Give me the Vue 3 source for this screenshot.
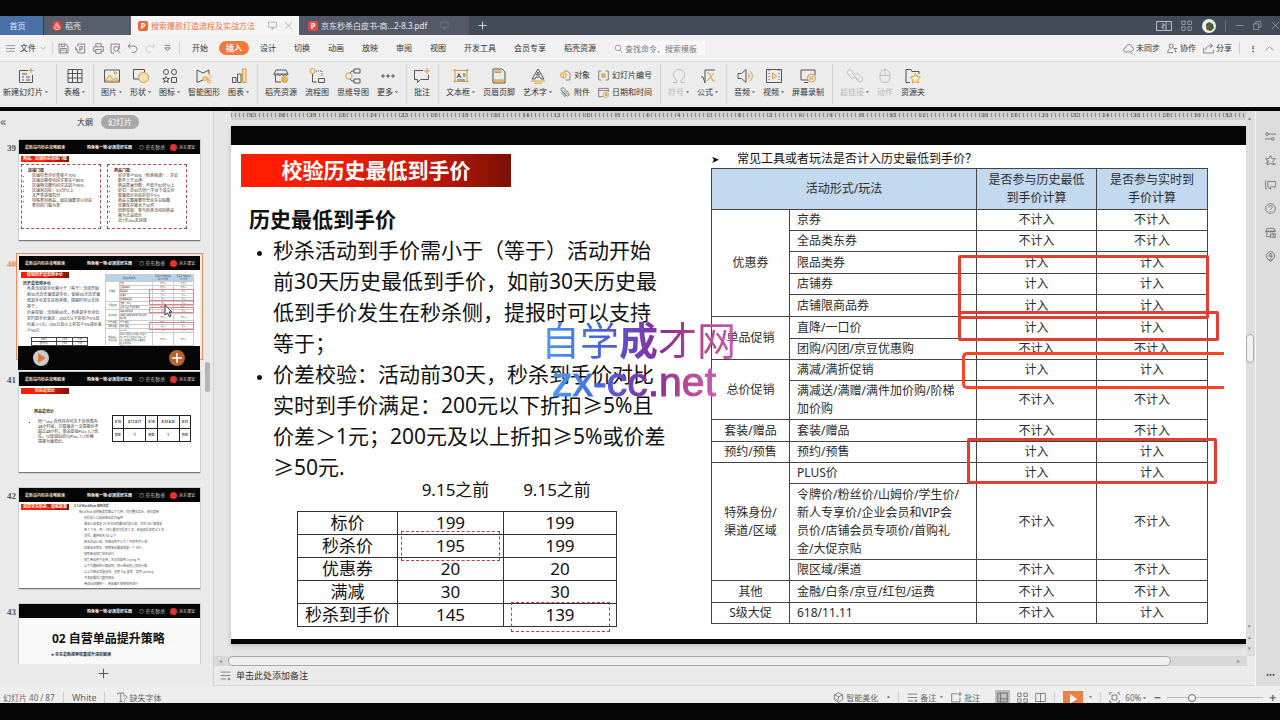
<script setup>
import { ref } from 'vue'

const D = 'stroke="#555"'
const O = 'stroke="#d99a3c"'
const G = 'stroke="#bdbdbd"'

const icons = {
  newSlide: `<path ${D} d="M10 2.500H1.500v12h13V7"/><path ${D} d="M4 6h5M4 9h2M8 9h4M4 12h2M8 12h4"/><path ${O} d="M13 0v5M10.500 2.500h5"/>`,
  table: `<path ${D} d="M1 1.500h14v13H1zM1 5.500h14M1 10h14M5.500 1.500v13M10.500 1.500v13"/>`,
  picture: `<path ${D} d="M.5 2h15v12H.5z"/><path ${O} fill="#f3dcae" d="M1 13l4.500-6 4 5 2.500-2.500 3 3.500z"/><circle ${O} cx="11.500" cy="5" r="1.200"/>`,
  shapes: `<path ${D} d="M6 11H.5V1.500h11V4"/><circle ${O} fill="#f5deb4" cx="10.500" cy="9.500" r="5"/>`,
  glyphs: `<circle ${D} cx="4" cy="4" r="2.500"/><circle ${D} cx="12" cy="4" r="2.500"/><path ${D} d="M4 8.500l1 2h2.500l-2 1.500.7 2.500-2.200-1.500-2.200 1.500.7-2.500-2-1.500H3zM9.500 9.500h5v5h-5z"/>`,
  smart: `<path ${D} d="M7 12L1 14.500V2l6 3 6-3v4"/><path ${O} fill="#fbeed6" d="M7 9h4v3H7zM12 5.500l3 3-3 3-2-2M13 12a1.500 1.500 0 1 0 .1 0"/>`,
  chart: `<path ${D} d="M1.500 9.500h3.500v5H1.500zM6.500 6h3.500v8.500H6.500z"/><path ${O} fill="#f5deb4" d="M11.500 1h3.500v13.500h-3.500z"/>`,
  store: `<path ${D} d="M3 2h10l2 4H1zM1 6c0 2 3 2 3.500 0C5 8 8 8 8.500 6c.5 2 3 2 3.500 0 0 2 3 1.500 3 0M2.500 8v6H8"/><circle ${O} fill="#f0c46e" cx="11.500" cy="11.500" r="3"/><path ${O} d="M9 9l5 5M14 9l-5 5"/>`,
  storeGrey: `<path ${D} d="M3 2h10l2 4H1zM1 6c0 2 3 2 3.500 0C5 8 8 8 8.500 6c.5 2 3 2 3.500 0 0 2 3 1.500 3 0M2.500 8v6H7"/><path ${D} d="M8 10h7v5H8zM12 10v5"/>`,
  flow: `<circle ${O} cx="3.500" cy="3" r="2.500"/><path ${D} stroke-dasharray="1 1" d="M7 3h6v6"/><path ${D} d="M3.500 6v8H8M9.500 10.500h6v4h-6z"/>`,
  mind: `<circle ${O} cx="4" cy="8" r="3.200"/><path ${D} d="M9 1h6v4H9zM9 11h6v4H9zM5 5l2-2h2M5 11l2 2h2"/>`,
  more: `<path ${D} d="M2 7h2v2H2zM7 7h2v2H7zM12 7h2v2h-2z"/>`,
  comment: `<path ${D} d="M9 2.500H.5v9h3v3l3-3h8V7"/><path ${O} d="M13 0v6M10 3h6"/>`,
  textbox: `<path ${O} d="M2 2.500h12v11H2z"/><path stroke="#d99a3c" fill="#d99a3c" d="M1 1.500h1v1H1zM14 1.500h1v1h-1zM1 13h1v1H1zM14 13h1v1h-1z"/><path ${D} d="M4 10l2-4.500L8 10M5 8.500h2M10 6h2.500M10 8h2.500M4 12h8"/>`,
  header: `<path ${D} d="M2 1h9l3 3v11H2z"/><path ${O} fill="#f0c888" d="M4 3h6v1.500H4zM3 12h10v2H3z"/>`,
  wordart: `<path ${D} d="M8 1L2 11h3l1-2h4l1 2h3zM8 4l-1.500 3h3z"/><path ${O} d="M1 13h14M4 15.200h8"/>`,
  object: `<path ${D} d="M6 1.500h5l3.500 3.500v9.500H8"/><path ${O} fill="#f3dcae" d="M5 3l4 2v5l-4 2-4-2V5zM1 5l4 2 4-2M5 7v5"/>`,
  clip: `<path ${D} d="M3 5l6 7a2 2 0 0 0 4-3L6 2a2.500 2.500 0 0 0-4 3l7 8M6 5l6 6M2 8l6 7"/>`,
  number: `<path ${D} d="M5 1.500H1v13h4M11 1.500h4v13h-4"/><path ${O} fill="#e9b25b" d="M5.500 5.500h5v5h-5z"/>`,
  date: `<path ${D} d="M7 14H1V2h14v5M1 5h14"/><circle ${O} fill="#f5deb4" cx="11.500" cy="11.500" r="4"/><path ${D} d="M11.500 9v3h2"/>`,
  omega: `<path ${G} d="M2 14.500h4v-2C0 9 2 1.500 8 1.500s8 7.500 2 11v2h4"/>`,
  formula: `<path ${D} d="M1 9h2l2 6V2h10"/><path ${O} d="M7 5h2l4 8h2M14 5L7 13"/>`,
  audio: `<path ${D} d="M1 5.500h3.500L9 1.500v13l-4.500-4H1z"/><path ${O} d="M11 5c1.500 2 1.500 4 0 6M13 3c3 3 3 7 0 10"/>`,
  video: `<path ${D} d="M.5 1.500h15v13H.5z"/><path ${D} stroke-dasharray="1 2" d="M3 2v12M13 2v12"/><path ${O} d="M6.500 5l4 3-4 3z"/>`,
  record: `<path ${D} d="M8 12H1V2h14v5M4 14.500h4"/><circle ${O} cx="11.500" cy="10" r="4"/><circle ${O} cx="11.500" cy="10" r="1.500"/>`,
  link: `<path ${G} d="M8 6L5 2.500a2.500 2.500 0 0 0-4 3.500l3 3.500a2.500 2.500 0 0 0 3.500 0M8 9l3 4a2.500 2.500 0 0 0 4-3.500L12 6.500a2.500 2.500 0 0 0-3.500 0M5 5l6 7"/>`,
  mouse: `<path ${G} d="M3 7c0-7 10-7 10 0v3c0 6-10 6-10 0zM3 7.500h10M8 0v7"/>`,
  folder: `<path ${D} d="M5 14.500H1v-13h5l1 2h7V6"/><path ${O} fill="#fdf3dc" d="M10.500 5.500l1.500 3 3.500.5-2.500 2.500.5 3.500-3-1.700-3 1.700.5-3.500L5.500 9l3.500-.5z"/>`,
  save: `<path ${D} d="M1.500 1.500h10l3 3v10h-13zM4 14V8h8v6M5 2v3h5V2M6 10.500h4"/>`,
  exportPdf: `<path ${D} d="M4 5V1.500h10v13H4V11M1 5v5h2M7 12V5h3.500v4H7M1 8l3 2"/>`,
  print: `<path ${D} d="M4 5V1h8v4M3 12H1V5.500h14V12h-2M4 9.500h8v5.500H4z"/>`,
  preview: `<path ${D} d="M6 14.500H1.500v-13h12V9"/><circle ${D} cx="9" cy="8.500" r="3.500"/><path ${D} d="M11.500 11l3.500 4"/>`,
  undo: `<path ${D} d="M5 1L1.500 4.500 5 8M2 4.500h8c6 0 6 9 0 9H7"/>`,
  redo: `<path ${G} d="M11 1l3.500 3.500L11 8M14 4.500H6c-6 0-6 9 0 9h3"/>`,
  search: `<circle ${D} cx="7" cy="7" r="5"/><path ${D} d="M11 11l4 4"/>`,
  cloud: `<path ${D} d="M9 13H4C0 13 0 7 4 7c0-6 9-6 9-1 3 1 3 3 2 4M9 11l2 2 4-3M11 15h3"/>`,
  collab: `<circle ${D} cx="6" cy="4.500" r="3"/><path ${D} d="M4 8c-3 2-3 6-3 6h8M12 8v5M9.500 8H15M12 13h2"/>`,
  share: `<path ${D} d="M1 7v7.500h14V10M4 10c0-5 4-6 9-6M10 1l4 3-4 3"/>`,
  sliders: `<circle ${D} cx="3" cy="4.500" r="2"/><path ${D} d="M5 4.500h11M0 11.500h9"/><circle ${D} cx="11.500" cy="11.500" r="2"/>`,
  star: `<path ${D} d="M8 1l2 4 5 .5-3.500 4 1 5L8 12l-4.500 2.500 1-5L1 5.500 6 5zM1 13l4-5M13 13h3"/>`,
  slides: `<path ${D} d="M3 14H.5V2M4 3.500h11.500v8H8V15l-3-3.500H4z"/>`,
  help: `<circle ${D} cx="8" cy="8" r="7"/><path ${D} d="M5.500 6.500c0-4 5-3 5-.5 0 2-2.500 2-2.500 4M8 11.500V13"/>`,
  pin: `<circle ${D} cx="8" cy="7" r="6"/><path ${D} d="M5 12.500l3 3 3-3M8 3L5.500 7.500h5L8 11M8 3l2.500 4.500"/>`,
  notes: `<path ${D} d="M1 3h14M1 8h14M1 13h8M11 13h4M13 11v4"/>`,
  font: `<path ${D} d="M1 4V1.500h9V4M5.500 1.500V14M3 14h5M9 6c4-2 7 1 4 3-2 1-2 2-2 3M11 13.500V15"/>`,
  beauty: `<path ${D} d="M8 1l6 3v7l-6 4-6-4V4zM2 4l6 3 6-3M8 7v4M5 10l2 3"/>`,
  commentSmall: `<path ${D} d="M9 2.500H1v12h12V8M13 0v6M10 3h6"/>`,
  normal: `<path ${D} d="M1 1.500h14v13H1zM5 1.500v13M5 10h10"/>`,
  grid: `<path ${D} d="M1 1.500h5v5H1zM10 1.500h5v5h-5zM1 10h5v5H1zM10 10h5v5h-5z"/>`,
  reading: `<path ${D} d="M1 2h14v12H1zM8 2v13"/>`,
  fit: `<path ${D} d="M1 4V1h3M12 1h3v3M15 12v3h-3M4 15H1v-3M4.500 4.500h7v7h-7z"/>`,
  monitor: `<path stroke="currentColor" d="M1 2h14v9H1zM5 14h6M8 11v3"/>`,
  plus: `<path stroke="currentColor" stroke-width="1.500" d="M8 1v14M1 8h14"/>`,
  windows: `<path stroke="currentColor" d="M.5 3.500h15v9H.5zM10 3.500v9M5.500 6h2.500v2H6v2h2.500M12.500 6h1"/>`,
  gridLight: `<path stroke="currentColor" d="M1 1.500h5v5H1zM10 1.500h5v5h-5zM1 10h5v5H1zM10 10h5v5h-5z"/>`,
  min: `<path stroke="currentColor" d="M1 8h14"/>`,
  restore: `<path stroke="currentColor" d="M1 5h9v10H1zM5 5V1h9v10h-4"/>`,
  close: `<path stroke="currentColor" d="M2 2l12 12M14 2L2 14"/>`,
  up: `<path ${D} d="M1 11l7-6 7 6"/>`,
  down: `<path ${D} d="M2 5l6 6 6-6"/>`,
  tray: `<path ${D} d="M4 3.500h8M4 7h8l-4 4z"/>`,
  menu: `<path ${D} d="M0 3h16M0 8h16M0 13h16"/>`,
}

const quick = ['save', 'exportPdf', 'print', 'preview', 'undo', 'redo', 'tray']
const menus = ['开始', '插入', '设计', '切换', '动画', '放映', '审阅', '视图', '开发工具', '会员专享', '稻壳资源']

const ribbon = [
  { icon: 'newSlide', label: '新建幻灯片', arrow: true }, { sep: true },
  { icon: 'table', label: '表格', arrow: true }, { sep: true },
  { icon: 'picture', label: '图片', arrow: true },
  { icon: 'shapes', label: '形状', arrow: true },
  { icon: 'glyphs', label: '图标', arrow: true },
  { icon: 'smart', label: '智能图形' },
  { icon: 'chart', label: '图表', arrow: true }, { sep: true },
  { icon: 'store', label: '稻壳资源' },
  { icon: 'flow', label: '流程图' },
  { icon: 'mind', label: '思维导图' },
  { icon: 'more', label: '更多', arrow: true }, { sep: true },
  { icon: 'comment', label: '批注' }, { sep: true },
  { icon: 'textbox', label: '文本框', arrow: true },
  { icon: 'header', label: '页眉页脚' },
  { icon: 'wordart', label: '艺术字', arrow: true },
  { stack: [{ icon: 'object', label: '对象' }, { icon: 'clip', label: '附件' }] },
  { stack: [{ icon: 'number', label: '幻灯片编号' }, { icon: 'date', label: '日期和时间' }] }, { sep: true },
  { icon: 'omega', label: '符号', arrow: true, off: true },
  { icon: 'formula', label: '公式', arrow: true }, { sep: true },
  { icon: 'audio', label: '音频', arrow: true },
  { icon: 'video', label: '视频', arrow: true },
  { icon: 'record', label: '屏幕录制' }, { sep: true },
  { icon: 'link', label: '超链接', arrow: true, off: true },
  { icon: 'mouse', label: '动作', off: true },
  { icon: 'folder', label: '资源夹' },
]

const ruler = Array.from({ length: 33 }, (_, i) => Math.abs(32 - i * 2))

const points = [
  ['秒杀活动到手价需小于（等于）活动开始', '前30天历史最低到手价，如前30天历史最', '低到手价发生在秒杀侧，提报时可以支持', '等于；'],
  ['价差校验：活动前30天，秒杀到手价对比', '实时到手价满足：200元以下折扣≥5%且', '价差＞1元；200元及以上折扣≥5%或价差', '≥50元.'],
]

const prices = [
  ['标价', '199', '199'],
  ['秒杀价', '195', '199'],
  ['优惠券', '20', '20'],
  ['满减', '30', '30'],
  ['秒杀到手价', '145', '139'],
]

const N = '不计入'
const Y = '计入'
const rules = [
  { group: '优惠券', span: 5, name: '京券', a: N, b: N },
  { name: '全品类东券', a: N, b: N },
  { name: '限品类券', a: Y, b: Y, h: 'mid' },
  { name: '店铺券', a: Y, b: Y },
  { name: '店铺限商品券', a: Y, b: Y, h: 'mid' },
  { group: '单品促销', span: 2, name: '直降/一口价', a: Y, b: Y, h: 'mid' },
  { name: '团购/闪团/京豆优惠购', a: N, b: N },
  { group: '总价促销', span: 2, name: '满减/满折促销', a: Y, b: Y },
  { name: '满减送/满赠/满件加价购/阶梯\n加价购', a: N, b: N, h: 'two' },
  { group: '套装/赠品', span: 1, name: '套装/赠品', a: N, b: N, h: 'mid' },
  { group: '预约/预售', span: 1, name: '预约/预售', a: Y, b: Y },
  { group: '特殊身份/\n渠道/区域', span: 3, name: 'PLUS价', a: Y, b: Y },
  { name: '令牌价/粉丝价/山姆价/学生价/\n新人专享价/企业会员和VIP会\n员价/店铺会员专项价/首购礼\n金/大促京贴', a: N, b: N, h: 'four' },
  { name: '限区域/渠道', a: N, b: N },
  { group: '其他', span: 1, name: '金融/白条/京豆/红包/运费', a: N, b: N, h: 'mid' },
  { group: 'S级大促', span: 1, name: '618/11.11', a: N, b: Y },
]

const shopRules = ['店铺综合评价星级≥70%', '店铺近期单均好评率达≥85%', '店铺物流履约好评达到≥95%', '店铺风向标：3.5分以上', '无严重违规扣分', '特殊类目商品，如店铺要求以对应\n类目的门槛为准']
const goodsRules = ['好评率≥90%（秒杀频道）、评论\n数不少于20条', '商品质量分数：不低于60分以上', '折扣：近30天同一平台下成交价\n取最低价对应折扣≤9.5', '商品主图需要符合京东白底图', '优惠库存需大于50件', '同款校验：参与秒杀活动的商品\n需为正品低价', '近7天sku无违规']
const fineLines = ['在提报入口选择单品后可看到', '单品价格满足 20 天对应的最低提报价格，对应 SKU 需满足', '每 7 个天，同一 SPU 最多可提报 2 次，若连续提报超过 3 次', '范围，最终排名 30 以下', '若无活动价格，则单品到手价为 1 件的到手价格', '如单品无库存，按照单品最高销量一个 SPU', '按照单品销售排名进行', '预售商品暂不支持，无法匹配到 Listing 中', '以下为最新的计算规则，预计单品权重加权计算', '以上为单品流量规则，参考 Top 搜索、类目 ranking', '不满足最低门槛则退出', '商品标题需统一，单品图片按照排序进行']

const side = ['sliders', 'star', 'slides', 'help', 'storeGrey', 'pin']
const zoom = ref(24)
const note = ref('')
const query = ref('')
</script>

<template>
  <div class="screen">
    <header class="tabs">
      <button class="tab home">首页</button>
      <button class="tab docer"><i class="flame">♨</i>稻壳</button>
      <button class="tab active"><i class="ppt">P</i><span class="name">搜索爆款打造流程及实战方法</span>
        <svg class="ic s9" viewBox="0 0 16 16" v-html="icons.monitor" />
        <svg class="ic s9" viewBox="0 0 16 16" v-html="icons.close" />
      </button>
      <button class="tab pdf"><i class="ppt">P</i><span class="name">京东秒杀白皮书-商...2-8.3.pdf</span>
        <svg class="ic s9" viewBox="0 0 16 16" v-html="icons.monitor" />
      </button>
      <button class="tab add" aria-label="新建"><svg class="ic s9" viewBox="0 0 16 16" v-html="icons.plus" /></button>
      <div class="window">
        <svg class="ic s16" viewBox="0 0 16 16" v-html="icons.windows" />
        <svg class="ic s11" viewBox="0 0 16 16" v-html="icons.gridLight" />
        <svg class="avatar" viewBox="0 0 14 14"><circle cx="7" cy="7" r="7" fill="#eee" /><path d="M4 5l3-2 4 2 1 4-3 3-4-1-1-3z" fill="#47602f" /><circle cx="6" cy="8" r="2" fill="#7b5a48" /></svg>
        <i class="bar dark"></i>
        <svg class="ic s9" viewBox="0 0 16 16" v-html="icons.min" />
        <svg class="ic s9" viewBox="0 0 16 16" v-html="icons.restore" />
        <svg class="ic s9" viewBox="0 0 16 16" v-html="icons.close" />
      </div>
    </header>

    <nav class="menu">
      <button class="file"><svg class="ic s11" viewBox="0 0 16 16" v-html="icons.menu" />文件<svg class="ic s6" viewBox="0 0 16 16" v-html="icons.down" /></button>
      <i class="bar"></i>
      <div class="quick">
        <svg v-for="q in quick" :key="q" class="ic s11" viewBox="0 0 16 16" v-html="icons[q]" />
      </div>
      <i class="bar"></i>
      <div class="menus">
        <button v-for="m in menus" :key="m" :class="{ on: m === '插入' }">{{ m }}</button>
      </div>
      <label class="find"><svg class="ic s9" viewBox="0 0 16 16" v-html="icons.search" /><input v-model="query" aria-label="查找命令" placeholder="查找命令、搜索模板" /></label>
      <div class="account">
        <button><svg class="ic s11" viewBox="0 0 16 16" v-html="icons.cloud" />未同步</button>
        <button><svg class="ic s11" viewBox="0 0 16 16" v-html="icons.collab" />协作</button>
        <button><svg class="ic s11" viewBox="0 0 16 16" v-html="icons.share" />分享</button>
        <i class="bar"></i><span class="dots">⋮</span>
        <svg class="ic s9" viewBox="0 0 16 16" v-html="icons.up" />
      </div>
    </nav>

    <div class="ribbon">
      <template v-for="(r, i) in ribbon" :key="i">
        <i v-if="r.sep" class="split"></i>
        <div v-else-if="r.stack" class="stack">
          <button v-for="s in r.stack" :key="s.label"><svg class="ic s11" viewBox="0 0 16 16" v-html="icons[s.icon]" />{{ s.label }}</button>
        </div>
        <button v-else class="tool" :class="{ off: r.off }">
          <svg class="ic s16" viewBox="0 0 16 16" v-html="icons[r.icon]" />
          <span>{{ r.label }}<i v-if="r.arrow" class="arrow"></i></span>
        </button>
      </template>
    </div>

    <main class="work">
      <aside class="panel">
        <div class="phead"><span class="fold">«</span><button>大纲</button><button class="on">幻灯片</button></div>
        <div class="thumbs">
          <section v-for="n in [39, 40, 41, 42, 43]" :key="n" class="item" :class="{ cur: n === 40 }">
            <b class="no">{{ n }}</b>
            <div class="thumb">
              <div class="thead"><span class="ttl">{{ n === 43 ? '' : '最新站内秒杀攻略解读' }}</span><span class="slogan">购鱼每一物·必须是好东西</span><span class="logo">◎ 京东秒杀</span><i class="dot"></i><span class="jd">京东课堂</span></div>

              <div v-if="n === 39" class="tbody">
                <div class="tag">商品、店铺秒杀提报门槛</div>
                <div class="pair">
                  <div class="dash"><b>店铺门槛</b><ul><li v-for="s in shopRules" :key="s">{{ s }}</li></ul></div>
                  <div class="dash"><b>商品门槛</b><ul><li v-for="s in goodsRules" :key="s">{{ s }}</li></ul></div>
                </div>
              </div>

              <div v-else-if="n === 40" class="tbody mini">
                <div class="mleft">
                  <div class="tag">校验历史最低到手价</div>
                  <b>历史最低到手价</b>
                  <ul><li v-for="p in points" :key="p[0]">{{ p.join('\n') }}</li></ul>
                  <table class="mprice"><tbody><tr v-for="p in prices.slice(0, 3)" :key="p[0]"><td v-for="(c, k) in p" :key="k">{{ c }}</td></tr></tbody></table>
                </div>
                <div class="mright">
                  <table>
                    <colgroup><col class="n1" /><col class="n2" /><col class="n3" /><col class="n4" /></colgroup>
                    <tbody>
                      <tr class="mh"><td colspan="2">活动形式/玩法</td><td>{{ '是否参与历史最低\n到手价计算' }}</td><td>{{ '是否参与实时到\n手价计算' }}</td></tr>
                      <tr v-for="r in rules" :key="r.name" :class="r.h"><td v-if="r.span" :rowspan="r.span">{{ r.group }}</td><td class="l">{{ r.name }}</td><td>{{ r.a }}</td><td>{{ r.b }}</td></tr>
                    </tbody>
                  </table>
                  <i class="mk m1"></i><i class="mk m2"></i><i class="mk m3"></i><i class="mk m4"></i>
                </div>
              </div>

              <div v-else-if="n === 41" class="tbody">
                <div class="tag">秒杀最低价</div>
                <div class="cols41">
                  <div><b>商品最低价</b><ul><li>{{ '同一sku 自然月内可多于自然周内\n48小时前，只取最近一次提报价不\n超过48小时，单品促销Plus 7+1优\n先，以促销后的以Plus 7+1价格\n提报为最低价。' }}</li></ul></div>
                  <table><tbody>
                    <tr><td>8.10</td><td>8.11-8.17</td><td>8.18</td><td>8.19-8.25</td><td>8.31</td></tr>
                    <tr><td>秒杀</td><td>1</td><td>秒杀</td><td>1</td><td>秒杀</td></tr>
                  </tbody></table>
                </div>
              </div>

              <div v-else-if="n === 42" class="tbody row42">
                <div class="tag">自营京东秒杀，提报政策</div>
                <div class="fine"><b>2.1.4 Workflow 规则流程</b><p>Workflow 规则触发后需以下几种，均可叠加互斥，每日更新</p><p v-for="f in fineLines" :key="f" class="pt">{{ f }}</p></div>
              </div>

              <div v-else class="tbody t43"><h3>02 自营单品提升策略</h3><p>➤ 京东最新搜索权重提升深层解读</p></div>
            </div>
            <div v-if="n === 40" class="play">
              <button class="go" aria-label="播放"><svg viewBox="0 0 16 16"><path d="M5 3l8 5-8 5z" fill="#e07a3c" /></svg></button>
              <button class="plus" aria-label="添加"><svg viewBox="0 0 16 16"><path d="M8 3v10M3 8h10" stroke="#fff" stroke-width="1.500" /></svg></button>
            </div>
            <svg v-if="n === 40" class="cursor" viewBox="0 0 9 14"><path d="M1 1v10l2.500-2 2 4 1.500-1-2-4H8z" fill="#fff" stroke="#333" /></svg>
          </section>
          <i class="pscroll"></i>
        </div>
        <button class="addSlide" aria-label="新建幻灯片"><svg class="ic s11" viewBox="0 0 16 16" v-html="icons.plus" /></button>
      </aside>

      <section class="editor">
        <div class="canvas">
          <div class="view">
            <div class="ruler"><span v-for="(v, i) in ruler" :key="i">{{ v }}</span></div>
            <article class="slide">
              <div class="body">
                <div class="left">
                  <h1>校验历史最低到手价</h1>
                  <h2>历史最低到手价</h2>
                  <ul class="points"><li v-for="p in points" :key="p[0]">{{ p.join('\n') }}</li></ul>
                  <div class="priceBox">
                    <table class="price">
                      <thead><tr><th></th><th class="h1">9.15之前</th><th class="h2">9.15之前</th></tr></thead>
                      <tbody><tr v-for="p in prices" :key="p[0]"><td v-for="(c, k) in p" :key="k">{{ c }}</td></tr></tbody>
                    </table>
                    <i class="dashed d1"></i><i class="dashed d2"></i>
                  </div>
                </div>
                <div class="right">
                  <p class="ask"><i>➤</i>常见工具或者玩法是否计入历史最低到手价？</p>
                  <div class="ruleBox">
                    <table class="rules">
                      <colgroup><col class="c1" /><col class="c2" /><col class="c3" /><col class="c4" /></colgroup>
                      <thead><tr><th colspan="2">活动形式/玩法</th><th>{{ '是否参与历史最低\n到手价计算' }}</th><th>{{ '是否参与实时到\n手价计算' }}</th></tr></thead>
                      <tbody>
                        <tr v-for="r in rules" :key="r.name" :class="r.h">
                          <td v-if="r.span" :rowspan="r.span">{{ r.group }}</td>
                          <td class="l">{{ r.name }}</td><td>{{ r.a }}</td><td>{{ r.b }}</td>
                        </tr>
                      </tbody>
                    </table>
                    <i class="mark k1"></i><i class="mark k2"></i><i class="mark k3"></i><i class="mark k4"></i>
                  </div>
                </div>
              </div>
              <div class="water"><span>自学<b>成</b>才网</span><span class="url">zx-cc.net</span></div>
            </article>
          </div>
          <div class="vscroll"><i class="cap">▴</i><i class="grip"></i><i class="ends">▾<br />▴<br />▾</i></div>
        </div>
        <div class="hscroll"><span>◂</span><i></i><span class="r">▸</span></div>
        <label class="notes"><svg class="ic s11" viewBox="0 0 16 16" v-html="icons.notes" /><input v-model="note" aria-label="备注" placeholder="单击此处添加备注" /></label>
      </section>

      <aside class="side">
        <button v-for="s in side" :key="s" :aria-label="s"><svg class="ic s11" viewBox="0 0 16 16" v-html="icons[s]" /></button>
        <span class="etc">•••</span>
      </aside>
    </main>

    <footer class="status">
      <span class="cnt">幻灯片 40 / 87</span><i class="bar"></i><span class="white">White</span><i class="bar"></i>
      <button class="miss"><svg class="ic s11" viewBox="0 0 16 16" v-html="icons.font" />缺失字体</button>
      <div class="tools">
        <button><svg class="ic s11" viewBox="0 0 16 16" v-html="icons.beauty" />智能美化<i class="arrow upw"></i></button>
        <i class="bar"></i>
        <button><svg class="ic s11" viewBox="0 0 16 16" v-html="icons.notes" />备注<i class="arrow"></i></button>
        <button><svg class="ic s11" viewBox="0 0 16 16" v-html="icons.commentSmall" />批注</button>
        <div class="views">
          <span class="sel"><svg class="ic s11" viewBox="0 0 16 16" v-html="icons.normal" /></span>
          <svg class="ic s11" viewBox="0 0 16 16" v-html="icons.grid" />
          <svg class="ic s11" viewBox="0 0 16 16" v-html="icons.reading" />
        </div>
        <i class="bar"></i>
        <button class="show" aria-label="放映"><svg viewBox="0 0 20 14"><path d="M7 3l7 5-7 5z" fill="#fff" /></svg></button><i class="arrow"></i>
        <i class="bar"></i>
        <div class="percent"><svg class="ic s11" viewBox="0 0 16 16" v-html="icons.fit" /><span>60%<i class="arrow"></i></span></div>
        <div class="zoomer"><b>−</b><input v-model="zoom" type="range" min="0" max="100" aria-label="缩放" /><b>+</b></div>
      </div>
    </footer>
  </div>
</template>

<style>
html, body { margin: 0; background: #050505; }
</style>

<style scoped>
.screen { box-sizing: border-box; display: flex; flex-direction: column; min-height: 100vh; padding: 16px 0 17px; background: #050505; color: #333; font: 8px/12px "Noto Sans", "Noto Sans CJK SC", sans-serif; overflow: hidden; }
button, input { border: 0; padding: 0; margin: 0; background: none; font: inherit; color: inherit; white-space: nowrap; }
i { font-style: normal; }
p, ul, h1, h2, h3 { margin: 0; padding: 0; }
.ic { fill: none; stroke-width: 1; flex: none; }
.s6 { width: 6px; height: 6px; } .s9 { width: 9px; height: 9px; } .s11 { width: 11px; height: 11px; } .s16 { width: 16px; height: 16px; }
.bar { width: 1px; height: 12px; background: #ccc; flex: none; }
.arrow { display: inline-block; margin: 0 0 2px 2px; border: 1px solid transparent; border-top: 2px solid #888; border-bottom: 0; width: 1px; }
.upw { border-top: 0; border-bottom: 2px solid #777; margin-left: 7px; }

.tabs { display: flex; height: 19px; background: #434a5a; color: #e6e8ee; }
.tab { display: flex; align-items: center; text-align: left; }
.home { width: 44px; justify-content: center; padding-right: 8px; background: #4a70a8; box-sizing: border-box; border-right: 1px solid #333a48; }
.docer { width: 87px; gap: 3px; padding-left: 8px; background: #57606a; box-sizing: border-box; }
.flame { width: 10px; height: 10px; border-radius: 5px; background: #e83a32; color: #fff; line-height: 9px; text-align: center; }
.ppt { width: 10px; height: 10px; border-radius: 2px; background: #f0643c; color: #fff; font-weight: bold; line-height: 10px; text-align: center; flex: none; }
.active { width: 168px; gap: 3px; padding: 0 6px 0 7px; background: #f5f5f5; color: #f0743c; box-sizing: border-box; }
.active .ic { color: #888; margin-left: 4px; }
.active .name { flex: 1; }
.pdf { width: 170px; gap: 3px; padding: 0 20px 0 9px; background: #545868; box-sizing: border-box; }
.pdf .ppt { background: #e04a4a; }
.pdf .name { flex: 1; }
.pdf .ic { color: #7e8392; }
.add { padding-left: 9px; }
.window { display: flex; align-items: center; gap: 9px; margin-left: auto; color: #b9bec9; }
.avatar { width: 14px; height: 14px; margin-left: 1px; }
.bar.dark { background: #6a7080; }

.menu { display: flex; align-items: center; height: 26px; padding-left: 5px; background: #f1f1f2; border-bottom: 1px solid #dcdcdc; }
.file { display: flex; align-items: center; gap: 4px; margin-right: 6px; }
.file .s11 { height: 9px; }
.quick { display: flex; gap: 6px; padding: 0 6px 0 5px; width: 115px; justify-content: space-between; }
.menus { display: flex; gap: 18px; margin-left: 12px; }
.menus .on { background: #ef7a3e; color: #fff; border-radius: 7px; padding: 1px 7px; margin: 0 -7px; font-weight: bold; }
.find { display: flex; align-items: center; gap: 2px; margin-left: 18px; color: #777; background: #f8f8f8; }
.find input { width: 80px; height: 14px; outline: 0; }
input::placeholder { color: inherit; opacity: 1; }
.account { display: flex; align-items: center; gap: 7px; margin-left: auto; padding-right: 6px; }
.account button { display: flex; align-items: center; gap: 2px; }
.dots { font-weight: bold; margin: 0 1px 0 2px; }

.ribbon { display: flex; gap: 8px; height: 45px; padding-left: 3px; background: #ececec; border-bottom: 4px solid #060606; }
.tool { display: flex; flex-direction: column; align-items: center; padding-top: 6px; gap: 2px; flex: none; }
.off { color: #bbb; }
.split { width: 1px; height: 40px; margin: 2px -1px 0 0; background: #d2d2d2; flex: none; }
.stack { display: flex; flex-direction: column; gap: 5px; padding-top: 7px; }
.stack button { display: flex; align-items: center; gap: 3px; }

.work { display: flex; flex: 1; background: #ececec; }
.panel { width: 214px; flex: none; display: flex; flex-direction: column; border-right: 1px solid #cfcfcf; box-sizing: border-box; background: #eaeaea; }
.phead { display: flex; align-items: center; height: 20px; padding-top: 2px; box-sizing: border-box; }
.fold { width: 77px; font-size: 12px; color: #666; }
.phead .on { background: #a8a8a8; color: #fff; border-radius: 7px; padding: 1px 7px; margin-left: 8px; }
.thumbs { position: relative; flex: 1 1 0; min-height: 530px; overflow: hidden; display: flex; flex-direction: column; gap: 15px; padding-top: 9px; box-sizing: border-box; }
.item { position: relative; display: flex; height: 101px; flex: none; }
.no { width: 19px; flex: none; padding: 2px 3px 0 0; box-sizing: border-box; text-align: right; font: bold 9px/12px "Liberation Serif", serif; color: #555; }
.cur .no { color: #e98a56; }
.thumb { width: 181px; background: #fff; box-shadow: 0 0 0 1px #cfcfcf; border-bottom: 1px solid #777; box-sizing: border-box; overflow: hidden; font-size: 4px; line-height: 5px; color: #333; }
.cur .thumb { box-shadow: 0 0 0 2px #eaeaea, 0 0 0 3px #e8915f; }
.thead { display: flex; align-items: center; height: 14px; background: #050505; color: #ddd; white-space: nowrap; padding-left: 6px; }
.ttl { width: 62px; font-weight: bold; }
.slogan { width: 52px; font-weight: bold; color: #fff; }
.logo { width: 31px; font-size: 5px; }
.dot { width: 7px; height: 7px; border-radius: 4px; background: #e8302c; margin-right: 2px; }
.tbody { padding: 2px; }
.tag { width: 48px; height: 6px; line-height: 6px; background: linear-gradient(90deg, #fb1d04 40%, #861208); color: #fff; font-weight: bold; text-align: center; white-space: nowrap; }
.pair { display: flex; gap: 6px; margin-top: 2px; }
.dash { width: 80px; height: 65px; border: 1px dashed #b04a4a; box-sizing: border-box; padding: 3px 0 0 6px; white-space: pre; }
.thumb ul { list-style: disc; padding-left: 4px; white-space: pre; }
.mini { display: flex; }
.mleft { width: 81px; flex: none; }
.mleft b { display: block; margin: 3px 0 0 2px; }
.mleft ul { margin-left: 2px; }
.mleft li { line-height: 6px; }
.thumb table { border-collapse: collapse; }
.thumb td { border: 1px solid #999; padding: 0; text-align: center; white-space: nowrap; }
.mprice { margin: 3px 0 0 10px; width: 57px; line-height: 3px; font-size: 3px; }
.mprice td { border-color: #444; }
.mright { position: relative; padding: 2px 0 0 3px; font-size: 2px; line-height: 3px; }
.mright table { table-layout: fixed; width: 88px; }
.n1 { width: 14px; } .n2 { width: 33px; } .n3 { width: 21px; } .n4 { width: 20px; }
.mright td { border-color: #ccc; white-space: pre; }
.mright td.l { text-align: left; }
.thumb .mh td { background: #b9d2ea; height: 6px; }
.mk { position: absolute; border: 1px solid #e98080; box-sizing: border-box; right: 0; width: 45px; }
.m1 { top: 17px; height: 12px; } .m2 { top: 28px; height: 5px; } .m3 { top: 35px; height: 6px; } .m4 { top: 50px; height: 8px; }
.play { position: absolute; left: 18px; right: 13px; top: 90px; height: 24px; background: #060606; display: flex; align-items: center; justify-content: space-between; padding: 0 15px; box-sizing: border-box; z-index: 2; }
.play button { width: 16px; height: 16px; border-radius: 8px; display: flex; }
.play svg { width: 16px; height: 16px; }
.go { background: #cbcbcb; } .plus { background: #b7622f; }
.cursor { position: absolute; left: 164px; top: 48px; width: 9px; height: 14px; }
.cols41 { display: flex; padding: 15px 0 0 13px; gap: 8px; }
.cols41 ul { margin-top: 5px; }
.cols41 > div { width: 70px; flex: none; }
.cols41 table { width: 79px; height: 27px; margin-top: 6px; font-size: 3px; }
.cols41 td { border-color: #222; font-weight: bold; }
.row42 { display: flex; gap: 5px; }
.row42 .tag { flex: none; font-size: 4px; }
.fine { font-size: 3px; line-height: 4px; white-space: nowrap; display: flex; flex-direction: column; gap: 2px; color: #555; }
.fine p { padding-left: 5px; } .fine .pt { padding-left: 10px; }
.t43 { padding: 12px 26px; background: #f9f9f9; height: 72px; }
.t43 h3 { font-size: 12px; line-height: 18px; margin-left: 7px; color: #111; white-space: nowrap; }
.t43 p { font-weight: bold; margin-top: 4px; padding-left: 6px; white-space: nowrap; }
.pscroll { position: absolute; right: 3px; top: 231px; width: 5px; height: 30px; border-radius: 3px; background: #b5b5b5; }
.addSlide { height: 22px; padding-right: 6px; color: #555; }

.editor { flex: 1; min-width: 0; display: flex; flex-direction: column; background: #ebebeb; }
.canvas { display: flex; flex: 1; }
.view { flex: 1; padding-left: 17px; min-width: 0; background: #e6e6e6; }
.ruler { display: flex; height: 9px; padding: 0 3px 0 5px; margin-bottom: 6px; background: repeating-linear-gradient(90deg, #8a8a8a 0 1px, transparent 1px 4px) 0 2px / 100% 4px no-repeat #d0d0d0; font: 7px/8px "Liberation Serif", serif; color: #666; }
.ruler span { flex: 1; text-align: center; }
.slide { position: relative; border-top: 19px solid #050505; border-bottom: 5px solid #050505; background: #fff; box-shadow: 0 2px 5px #bbb; color: #111; }
.body { display: flex; min-height: 494px; }
.left { width: 480px; flex: none; padding: 9px 0 0 10px; box-sizing: border-box; }
h1 { width: 270px; height: 33px; background: linear-gradient(90deg, #ff1e02 20%, #c2190a 70%, #7a1006); color: #fff; font-size: 21px; line-height: 33px; text-align: center; }
h2 { margin: 17px 0 0 8px; font-size: 21px; line-height: 31px; }
.points { margin-left: 32px; list-style: disc; font-size: 21px; line-height: 31px; white-space: pre; }
.points li::marker { font-size: 13px; }
.priceBox { position: relative; width: 320px; margin-left: 56px; }
.price { width: 320px; table-layout: fixed; border-collapse: collapse; font-size: 17px; line-height: 22px; text-align: center; }
.price th { height: 28px; padding: 0; font-weight: normal; line-height: 14px; vertical-align: top; }
.price th:first-child { width: 100px; }
.price th.h1 { width: 96px; padding-left: 10px; } .price th.h2 { padding-right: 6px; }
.price td { padding: 0; height: 22px; border: 1px solid #333; }
.dashed { position: absolute; width: 99px; height: 30px; box-sizing: border-box; border: 1px dashed #c43a3a; }
.d1 { left: 104px; top: 48px; } .d2 { left: 214px; top: 119px; }
.right { flex: 1; padding-top: 5px; }
.ask { font-size: 12px; line-height: 18px; white-space: nowrap; }
.ask i { display: inline-block; width: 26px; font-size: 10px; }
.ruleBox { position: relative; width: 497px; }
.rules { width: 497px; table-layout: fixed; border-collapse: collapse; font-size: 12px; line-height: 18px; color: #2c2c2c; text-align: center; }
.c1 { width: 78px; } .c2 { width: 187px; } .c3 { width: 120px; } .c4 { width: 111px; }
.rules th { height: 40px; padding: 0; border: 1px solid #444; background: #c3d9f0; font-weight: normal; white-space: pre-line; }
.rules td { height: 20px; padding: 0; border: 1px solid #444; white-space: pre-line; }
.rules td.l { text-align: left; padding-left: 7px; white-space: pre; }
.rules .mid td { height: 21px; } .rules .two td { height: 38px; } .rules .four td { height: 75px; }
.mark { position: absolute; box-sizing: border-box; border: 3px solid #e23d33; border-radius: 2px; }
.k1 { left: 247px; top: 87px; width: 251px; height: 64px; }
.k2 { left: 247px; top: 143px; width: 261px; height: 30px; }
.k3 { left: 251px; top: 184px; width: 262px; height: 37px; border-color: #fb4526; border-right: 0; border-radius: 5px 0 0 5px; }
.k4 { left: 256px; top: 270px; width: 250px; height: 46px; }
.water { position: absolute; left: 310px; top: 174px; font: 39px/46px "Liberation Sans", "Noto Sans CJK SC", sans-serif; white-space: nowrap; display: flex; flex-direction: column; }
.water span { background: linear-gradient(90deg, #4a9cf0, #4468e2 28%, #8a2c9c 62%, #b5458f 80%, #c85cb4); background-clip: text; -webkit-background-clip: text; color: transparent; }
.water .url { font-size: 41px; line-height: 34px; margin-left: 11px; align-self: flex-start; -webkit-text-stroke: 1px transparent; }
.vscroll { position: relative; width: 9px; background: #dedede; }
.cap { position: absolute; top: 1px; left: 2px; color: #888; font-size: 6px; }
.grip { position: absolute; top: 223px; left: 0; width: 8px; height: 29px; box-sizing: border-box; border: 1px solid #aaa; border-radius: 4px; background: #f2f2f2; }
.ends { position: absolute; bottom: 2px; left: 2px; font-size: 5px; color: #777; line-height: 11px; }
.hscroll { display: flex; align-items: center; height: 10px; margin: 0 8px 0 0; background: #d8d8d8; color: #888; font-size: 6px; }
.hscroll span { width: 14px; padding-left: 5px; box-sizing: border-box; }
.hscroll i { flex: 1; height: 8px; border: 1px solid #a8a8a8; border-radius: 5px; background: #efefef; }
.hscroll .r { width: 76px; padding-left: 66px; }
.notes { display: flex; align-items: center; gap: 5px; height: 20px; padding-left: 6px; border-bottom: 1px solid #d8d8d8; box-sizing: border-box; font-size: 9px; }
.notes input { flex: 1; outline: 0; }
.side { width: 25px; flex: none; border-left: 1px solid #f5f5f5; background: #dcdcdc; display: flex; flex-direction: column; align-items: center; gap: 13px; padding: 20px 0 5px 5px; box-sizing: border-box; }
.side button { height: 11px; display: flex; }
.etc { margin-top: auto; color: #555; }

.status { display: flex; align-items: center; height: 17px; padding: 6px 4px 0 3px; box-sizing: border-box; overflow: hidden; background: #eee; color: #666; white-space: nowrap; }
.cnt { width: 60px; } .white { padding: 0 7px 0 8px; font-size: 9px; }
.status button, .tools { display: flex; align-items: center; gap: 2px; }
.miss { margin-left: 12px; }
.status .tools { margin-left: auto; gap: 8px; }
.views { display: flex; align-items: center; gap: 7px; margin-left: 7px; }
.sel { background: #bdbdbd; padding: 2px; height: 11px; }
.show { width: 20px; height: 14px; background: #ef7f45; margin-right: -4px; }
.show svg { width: 20px; height: 14px; }
.percent { display: flex; align-items: center; gap: 5px; }
.zoomer { display: flex; align-items: center; gap: 6px; font-size: 12px; }
.zoomer input { width: 96px; height: 10px; appearance: none; background: linear-gradient(#bbb, #bbb) center / 100% 1px no-repeat; }
.zoomer input::-webkit-slider-thumb { appearance: none; width: 8px; height: 8px; border: 1px solid #666; border-radius: 4px; background: #f4f4f4; }
</style>
